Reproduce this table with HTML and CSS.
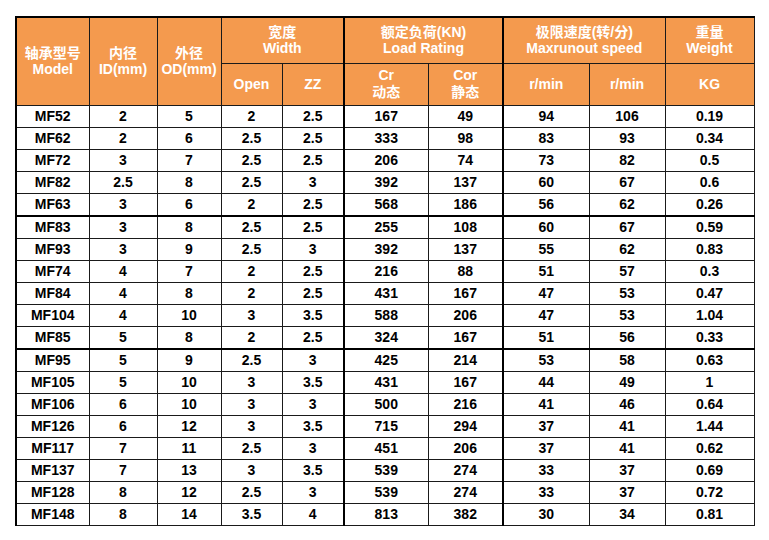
FILE: index.html
```html
<!DOCTYPE html>
<html lang="zh">
<head>
<meta charset="utf-8">
<title>MF Bearings</title>
<link rel="stylesheet" href="styles.css">
</head>
<body>
<table class="spec">
  <colgroup>
    <col class="c-model"><col class="c-id"><col class="c-od"><col class="c-open"><col class="c-zz">
    <col class="c-cr"><col class="c-cor"><col class="c-s1"><col class="c-s2"><col class="c-kg">
  </colgroup>
  <thead>
    <tr class="h1">
      <th rowspan="2">轴承型号<br>Model</th>
      <th rowspan="2">内径<br>ID(mm)</th>
      <th rowspan="2">外径<br>OD(mm)</th>
      <th colspan="2">宽度<br>Width</th>
      <th colspan="2" class="sep">额定负荷(KN)<br>Load Rating</th>
      <th colspan="2" class="sep">极限速度(转/分)<br>Maxrunout speed</th>
      <th>重量<br>Weight</th>
    </tr>
    <tr class="h2">
      <th>Open</th>
      <th>ZZ</th>
      <th class="sep">Cr<br>动态</th>
      <th>Cor<br>静态</th>
      <th class="sep">r/min</th>
      <th>r/min</th>
      <th>KG</th>
    </tr>
  </thead>
  <tbody>
    <tr><td>MF52</td><td>2</td><td>5</td><td>2</td><td>2.5</td><td class="sep">167</td><td>49</td><td class="sep">94</td><td>106</td><td>0.19</td></tr>
    <tr><td>MF62</td><td>2</td><td>6</td><td>2.5</td><td>2.5</td><td class="sep">333</td><td>98</td><td class="sep">83</td><td>93</td><td>0.34</td></tr>
    <tr><td>MF72</td><td>3</td><td>7</td><td>2.5</td><td>2.5</td><td class="sep">206</td><td>74</td><td class="sep">73</td><td>82</td><td>0.5</td></tr>
    <tr><td>MF82</td><td>2.5</td><td>8</td><td>2.5</td><td>3</td><td class="sep">392</td><td>137</td><td class="sep">60</td><td>67</td><td>0.6</td></tr>
    <tr><td>MF63</td><td>3</td><td>6</td><td>2</td><td>2.5</td><td class="sep">568</td><td>186</td><td class="sep">56</td><td>62</td><td>0.26</td></tr>
    <tr class="grp"><td>MF83</td><td>3</td><td>8</td><td>2.5</td><td>2.5</td><td class="sep">255</td><td>108</td><td class="sep">60</td><td>67</td><td>0.59</td></tr>
    <tr><td>MF93</td><td>3</td><td>9</td><td>2.5</td><td>3</td><td class="sep">392</td><td>137</td><td class="sep">55</td><td>62</td><td>0.83</td></tr>
    <tr><td>MF74</td><td>4</td><td>7</td><td>2</td><td>2.5</td><td class="sep">216</td><td>88</td><td class="sep">51</td><td>57</td><td>0.3</td></tr>
    <tr><td>MF84</td><td>4</td><td>8</td><td>2</td><td>2.5</td><td class="sep">431</td><td>167</td><td class="sep">47</td><td>53</td><td>0.47</td></tr>
    <tr><td>MF104</td><td>4</td><td>10</td><td>3</td><td>3.5</td><td class="sep">588</td><td>206</td><td class="sep">47</td><td>53</td><td>1.04</td></tr>
    <tr><td>MF85</td><td>5</td><td>8</td><td>2</td><td>2.5</td><td class="sep">324</td><td>167</td><td class="sep">51</td><td>56</td><td>0.33</td></tr>
    <tr class="grp"><td>MF95</td><td>5</td><td>9</td><td>2.5</td><td>3</td><td class="sep">425</td><td>214</td><td class="sep">53</td><td>58</td><td>0.63</td></tr>
    <tr><td>MF105</td><td>5</td><td>10</td><td>3</td><td>3.5</td><td class="sep">431</td><td>167</td><td class="sep">44</td><td>49</td><td>1</td></tr>
    <tr><td>MF106</td><td>6</td><td>10</td><td>3</td><td>3</td><td class="sep">500</td><td>216</td><td class="sep">41</td><td>46</td><td>0.64</td></tr>
    <tr><td>MF126</td><td>6</td><td>12</td><td>3</td><td>3.5</td><td class="sep">715</td><td>294</td><td class="sep">37</td><td>41</td><td>1.44</td></tr>
    <tr><td>MF117</td><td>7</td><td>11</td><td>2.5</td><td>3</td><td class="sep">451</td><td>206</td><td class="sep">37</td><td>41</td><td>0.62</td></tr>
    <tr><td>MF137</td><td>7</td><td>13</td><td>3</td><td>3.5</td><td class="sep">539</td><td>274</td><td class="sep">33</td><td>37</td><td>0.69</td></tr>
    <tr><td>MF128</td><td>8</td><td>12</td><td>2.5</td><td>3</td><td class="sep">539</td><td>274</td><td class="sep">33</td><td>37</td><td>0.72</td></tr>
    <tr><td>MF148</td><td>8</td><td>14</td><td>3.5</td><td>4</td><td class="sep">813</td><td>382</td><td class="sep">30</td><td>34</td><td>0.81</td></tr>
  </tbody>
</table>
</body>
</html>
```

FILE: styles.css
```css
html, body {
  margin: 0;
  padding: 0;
  background: #ffffff;
}

body {
  padding: 16px 0 0 15px;
  font-family: "Liberation Sans", Arial, "Noto Sans CJK SC", sans-serif;
}

.spec {
  border-collapse: collapse;
  table-layout: fixed;
  width: 738px;
  border-top: 2px solid #000;
  border-left: 2px solid #000;
  border-right: 1px solid #000;
  border-bottom: 1px solid #000;
}

.c-model { width: 73px; }
.c-id { width: 68px; }
.c-od { width: 64px; }
.c-open { width: 61px; }
.c-zz { width: 62px; }
.c-cr { width: 84px; }
.c-cor { width: 75px; }
.c-s1 { width: 86px; }
.c-s2 { width: 76px; }
.c-kg { width: 89px; }

.spec th,
.spec td {
  border: 1px solid #1a1a1a;
  padding: 0;
  text-align: center;
  vertical-align: middle;
  font-weight: bold;
  font-size: 14px;
}

.spec th {
  background: #f49a4e;
  color: #ffffff;
  line-height: 16px;
  font-weight: bold;
}

.spec .h1 { height: 46px; }
.spec .h2 { height: 42px; }
.spec .h2 th { line-height: 17px; }

.spec td {
  color: #000000;
  height: 21.02px;
  line-height: 16px;
}

.spec .sep { border-left: 2px solid #000; }
.spec .grp td { border-top: 2px solid #000; }
```
